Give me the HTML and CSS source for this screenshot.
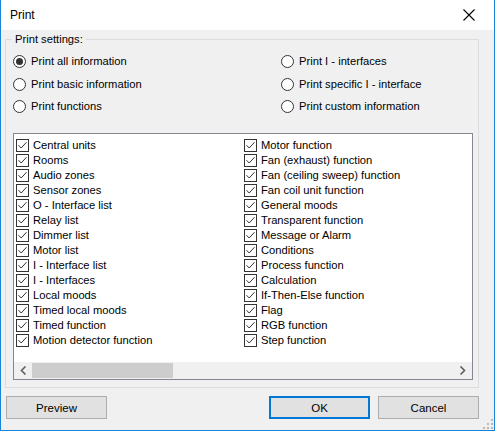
FILE: index.html
```html
<!DOCTYPE html>
<html>
<head>
<meta charset="utf-8">
<link rel="stylesheet" href="styles.css">
</head>
<body>
<div class="window">
  <div class="titlebar">
    <span class="title">Print</span>
    <svg class="close" width="12" height="12" viewBox="0 0 12 12"><path d="M0.5 0.5 L11.5 11.5 M11.5 0.5 L0.5 11.5" stroke="#000" stroke-width="1.1" fill="none"/></svg>
  </div>
  <div class="content">
    <div class="group">
      <span class="legend">Print settings:</span>
      <div class="radios">
        <div class="radio-col">
          <label class="radio"><span class="rb checked"></span>Print all information</label>
          <label class="radio"><span class="rb"></span>Print basic information</label>
          <label class="radio"><span class="rb"></span>Print functions</label>
        </div>
        <div class="radio-col right">
          <label class="radio"><span class="rb"></span>Print I - interfaces</label>
          <label class="radio"><span class="rb"></span>Print specific I - interface</label>
          <label class="radio"><span class="rb"></span>Print custom information</label>
        </div>
      </div>
      <div class="listbox">
        <div class="items">
          <div class="col">
            <div class="item"><span class="cb"></span>Central units</div>
            <div class="item"><span class="cb"></span>Rooms</div>
            <div class="item"><span class="cb"></span>Audio zones</div>
            <div class="item"><span class="cb"></span>Sensor zones</div>
            <div class="item"><span class="cb"></span>O - Interface list</div>
            <div class="item"><span class="cb"></span>Relay list</div>
            <div class="item"><span class="cb"></span>Dimmer list</div>
            <div class="item"><span class="cb"></span>Motor list</div>
            <div class="item"><span class="cb"></span>I - Interface list</div>
            <div class="item"><span class="cb"></span>I - Interfaces</div>
            <div class="item"><span class="cb"></span>Local moods</div>
            <div class="item"><span class="cb"></span>Timed local moods</div>
            <div class="item"><span class="cb"></span>Timed function</div>
            <div class="item"><span class="cb"></span>Motion detector function</div>
          </div>
          <div class="col">
            <div class="item"><span class="cb"></span>Motor function</div>
            <div class="item"><span class="cb"></span>Fan (exhaust) function</div>
            <div class="item"><span class="cb"></span>Fan (ceiling sweep) function</div>
            <div class="item"><span class="cb"></span>Fan coil unit function</div>
            <div class="item"><span class="cb"></span>General moods</div>
            <div class="item"><span class="cb"></span>Transparent function</div>
            <div class="item"><span class="cb"></span>Message or Alarm</div>
            <div class="item"><span class="cb"></span>Conditions</div>
            <div class="item"><span class="cb"></span>Process function</div>
            <div class="item"><span class="cb"></span>Calculation</div>
            <div class="item"><span class="cb"></span>If-Then-Else function</div>
            <div class="item"><span class="cb"></span>Flag</div>
            <div class="item"><span class="cb"></span>RGB function</div>
            <div class="item"><span class="cb"></span>Step function</div>
          </div>
        </div>
        <div class="hscroll">
          <svg class="arrow" width="7" height="9" viewBox="0 0 7 9"><path d="M5.5 0.5 L1.5 4.5 L5.5 8.5" stroke="#606060" stroke-width="1.6" fill="none"/></svg>
          <div class="track"><div class="thumb"></div></div>
          <svg class="arrow" width="7" height="9" viewBox="0 0 7 9"><path d="M1.5 0.5 L5.5 4.5 L1.5 8.5" stroke="#606060" stroke-width="1.6" fill="none"/></svg>
        </div>
      </div>
    </div>
    <div class="buttons">
      <button class="btn">Preview</button>
      <div class="spacer"></div>
      <button class="btn default">OK</button>
      <button class="btn">Cancel</button>
    </div>
    <svg class="grip" width="10" height="10" viewBox="0 0 10 10">
      <rect x="8" y="0" width="2" height="2" fill="#b8b8b8"/>
      <rect x="4" y="4" width="2" height="2" fill="#b8b8b8"/><rect x="8" y="4" width="2" height="2" fill="#b8b8b8"/>
      <rect x="0" y="8" width="2" height="2" fill="#b8b8b8"/><rect x="4" y="8" width="2" height="2" fill="#b8b8b8"/><rect x="8" y="8" width="2" height="2" fill="#b8b8b8"/>
    </svg>
  </div>
</div>
</body>
</html>
```

FILE: styles.css
```css
* { box-sizing: border-box; }
html, body { margin: 0; padding: 0; background: #fff; }
body {
  font-family: "Liberation Sans", Arial, sans-serif;
  font-size: 11.2px;
  color: #000;
}
.window {
  width: 495px;
  height: 431px;
  border: 1px solid #1883d7;
  border-top: none;
  display: flex;
  flex-direction: column;
}
.titlebar {
  height: 30px;
  background: #fff;
  display: flex;
  align-items: center;
  padding: 0 19px 0 9px;
  flex: none;
}
.title { flex: 1; font-size: 12px; }
.close { display: block; }
.content {
  flex: 1;
  background: #f0f0f0;
  position: relative;
  padding: 9px 15px 0 4px;
  display: flex;
  flex-direction: column;
}
.group {
  position: relative;
  height: 349px;
  border: 1px solid #dcdcdc;
  padding: 13px 5px 0 7px;
}
.legend {
  position: absolute;
  left: 6px;
  top: -9px;
  padding: 0 3px 0 3px;
  background: #f0f0f0;
  line-height: 16px;
}
.radios {
  display: flex;
  height: 80px;
}
.radio-col {
  display: flex;
  flex-direction: column;
  gap: 5.5px;
  width: 268px;
}
.radio-col.right { width: auto; }
.radio {
  display: flex;
  align-items: center;
  height: 17px;
  line-height: 17px;
  white-space: nowrap;
}
.rb {
  width: 13px;
  height: 13px;
  border: 1px solid #333;
  border-radius: 50%;
  background: #fff;
  margin-right: 5px;
  position: relative;
  flex: none;
}
.rb.checked::after {
  content: "";
  position: absolute;
  left: 2px; top: 2px;
  width: 7px; height: 7px;
  border-radius: 50%;
  background: #333;
}
.listbox {
  border: 1px solid #828790;
  background: #fff;
  height: 247px;
  display: flex;
  flex-direction: column;
}
.items {
  flex: 1;
  display: flex;
  padding: 4px 0 0 2px;
}
.col { width: 230px; }
.item {
  height: 15px;
  line-height: 15px;
  display: flex;
  align-items: center;
  white-space: nowrap;
}
.cb {
  width: 13px;
  height: 13px;
  border: 1px solid #333;
  background: #fff;
  margin-right: 4px;
  flex: none;
  position: relative;
}
.cb::after {
  content: "";
  position: absolute;
  left: 1px; top: 1px;
  width: 9px; height: 9px;
  background: url("data:image/svg+xml;utf8,<svg xmlns='http://www.w3.org/2000/svg' width='9' height='9' viewBox='0 0 9 9'><path d='M0.5 4.2 L3.2 7 L8.5 1.2' stroke='%23333' stroke-width='1' fill='none'/></svg>") no-repeat;
}
.hscroll {
  height: 17px;
  background: #f0f0f0;
  display: flex;
  align-items: center;
  padding: 0 6px;
}
.arrow { flex: none; }
.track {
  flex: 1;
  height: 17px;
  padding: 1px 4px;
}
.thumb {
  width: 141px;
  height: 15px;
  background: #cdcdcd;
  margin-left: 1px;
}
.buttons {
  display: flex;
  margin-top: 8px;
  padding-left: 1px;
  gap: 8px;
}
.spacer { flex: 1; }
.btn {
  width: 101px;
  height: 23px;
  background: #e1e1e1;
  border: 1px solid #adadad;
  font-family: inherit;
  font-size: 11.5px;
  color: #000;
  padding: 0;
  margin: 0;
}
.btn.default { border: 2px solid #0078d7; }
.grip {
  position: absolute;
  right: 1px;
  bottom: 1px;
}
```
